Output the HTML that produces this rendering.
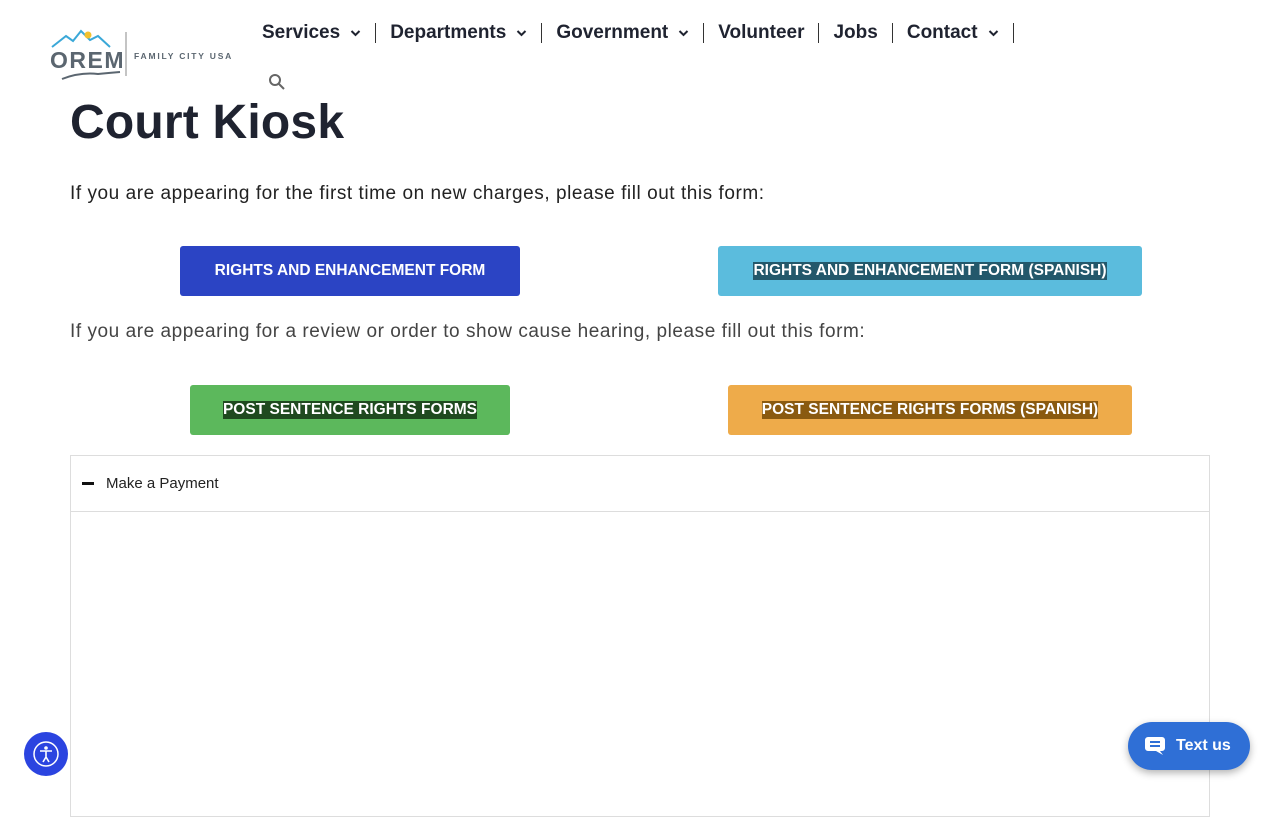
<!DOCTYPE html>
<html><head><style>
body{margin:0;width:1280px;height:800px;overflow:hidden;background:#fff;font-family:"Liberation Sans",sans-serif;position:relative}
.nav{position:absolute;top:23px;left:262px;display:flex;align-items:center;font-weight:bold;font-size:19px;color:#1f2330}
.nav span{padding:0 14px;border-right:1px solid #333;line-height:20px;display:flex;align-items:center}
.nav span:first-child{padding-left:0}
.chev{margin-left:10px;width:11px;height:10px}
h1{position:absolute;left:70px;top:95px;margin:0;font-size:48px;color:#1f2330;font-weight:bold;letter-spacing:0.2px}
p{position:absolute;left:70px;margin:0;font-size:19px;color:#222;letter-spacing:0.55px}
.btn{position:absolute;height:50px;border-radius:3px;display:flex;align-items:center;justify-content:center;color:#fff;font-weight:bold;font-size:15.5px}
.btn i{font-style:normal}
.acc{position:absolute;left:70px;top:455px;width:1138px;height:360px;border:1px solid #ddd}
.acchead{height:55px;border-bottom:1px solid #ddd;display:flex;align-items:center;font-size:15px;color:#222}
</style></head><body>
<svg style="position:absolute;left:48px;top:26px" width="192" height="58" viewBox="0 0 192 58">
<path d="M4 21 L18 10 L25 15 L33 5 L42 14 L50 10 L62 21" fill="none" stroke="#3aa8d8" stroke-width="2"/>
<circle cx="40" cy="9" r="3.5" fill="#f2c12e"/>
<text x="2" y="42" font-family="Liberation Sans" font-weight="bold" font-size="23" fill="#5b6670" letter-spacing="1.5">OREM</text>
<path d="M14 53 Q32 46 50 48 Q60 47 72 46" fill="none" stroke="#5b6670" stroke-width="2"/>
<line x1="78" y1="6" x2="78" y2="50" stroke="#888"/>
<text x="86" y="33" font-family="Liberation Sans" font-weight="bold" font-size="8.5" fill="#5b6670" letter-spacing="1.8">FAMILY CITY USA</text>
</svg>
<div class="nav">
<span>Services<svg class="chev" viewBox="0 0 10 10"><path d="M1 3l4 4 4-4" fill="none" stroke="#1f2330" stroke-width="2"/></svg></span>
<span>Departments<svg class="chev" viewBox="0 0 10 10"><path d="M1 3l4 4 4-4" fill="none" stroke="#1f2330" stroke-width="2"/></svg></span>
<span>Government<svg class="chev" viewBox="0 0 10 10"><path d="M1 3l4 4 4-4" fill="none" stroke="#1f2330" stroke-width="2"/></svg></span>
<span>Volunteer</span><span>Jobs</span>
<span>Contact<svg class="chev" viewBox="0 0 10 10"><path d="M1 3l4 4 4-4" fill="none" stroke="#1f2330" stroke-width="2"/></svg></span>
</div>
<svg style="position:absolute;left:268px;top:73px" width="18" height="18" viewBox="0 0 18 18"><circle cx="7" cy="7" r="5" fill="none" stroke="#666" stroke-width="2"/><path d="M11 11l5 5" stroke="#666" stroke-width="2"/></svg>
<h1>Court Kiosk</h1>
<p style="top:183px">If you are appearing for the first time on new charges, please fill out this form:</p>
<div class="btn" style="left:180px;top:246px;width:340px;background:#2b44c4">RIGHTS AND ENHANCEMENT FORM</div>
<div class="btn" style="left:718px;top:246px;width:424px;background:#5bbcdd"><i style="background:#23586b">RIGHTS AND ENHANCEMENT FORM (SPANISH)</i></div>
<p style="top:321px;color:#444">If you are appearing for a review or order to show cause hearing, please fill out this form:</p>
<div class="btn" style="left:190px;top:385px;width:320px;background:#5cb85c"><i style="background:#1f4a1f">POST SENTENCE RIGHTS FORMS</i></div>
<div class="btn" style="left:728px;top:385px;width:404px;background:#eeab4a"><i style="background:#8a5a10">POST SENTENCE RIGHTS FORMS (SPANISH)</i></div>
<div class="acc"><div class="acchead"><span style="display:inline-block;width:12px;height:3px;background:#111;margin:0 12px 0 11px"></span>Make a Payment</div></div>
<div style="position:absolute;left:24px;top:732px;width:44px;height:44px;border-radius:50%;background:#2b44e0;display:flex;align-items:center;justify-content:center">
<svg width="30" height="30" viewBox="0 0 30 30"><circle cx="15" cy="15" r="12" fill="none" stroke="#fff" stroke-width="1.5"/><circle cx="15" cy="9" r="1.8" fill="#fff"/><path d="M9 12h12M15 12v6l-3 5M15 18l3 5" fill="none" stroke="#fff" stroke-width="1.6"/></svg></div>
<div style="position:absolute;left:1128px;top:722px;width:122px;height:48px;border-radius:24px;background:#2f6fd6;box-shadow:0 3px 8px rgba(0,0,0,.3);display:flex;align-items:center;color:#fff;font-weight:bold;font-size:16px">
<svg style="margin:0 10px 0 16px" width="22" height="20" viewBox="0 0 22 20"><path d="M4 1h14a3 3 0 0 1 3 3v8a3 3 0 0 1-3 3h-2l3 4-7-4H4a3 3 0 0 1-3-3V4a3 3 0 0 1 3-3z" fill="#fff"/><path d="M6 6h10M6 10h10" stroke="#2f6fd6" stroke-width="2"/></svg>Text us</div>
</body></html>
